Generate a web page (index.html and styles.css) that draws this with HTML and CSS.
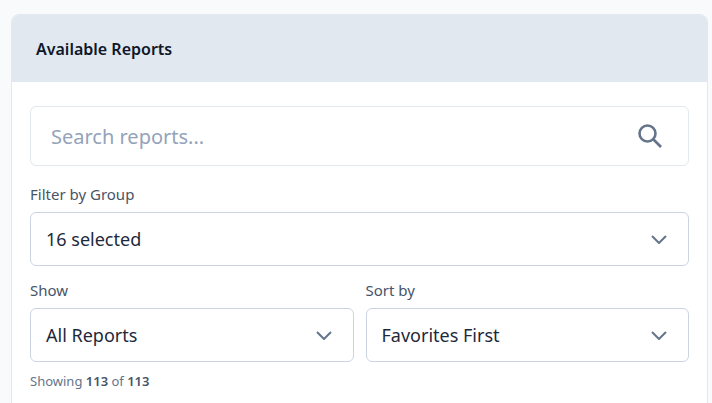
FILE: index.html
```html
<!DOCTYPE html>
<html lang="en">
<head>
<meta charset="utf-8">
<title>Available Reports</title>
<link rel="stylesheet" href="styles.css">
</head>
<body>
<section class="card">
  <header class="card-header"><h2 class="card-title">Available Reports</h2></header>
  <div class="card-body">
    <div class="search">
      <span class="search-text">Search reports...</span>
      <svg class="search-icon" viewBox="0 0 28 28" width="28" height="28" aria-hidden="true"><circle cx="11.5" cy="11.5" r="8" fill="none" stroke="currentColor" stroke-width="2.6"/><path d="M17.5 17.5 25 25" fill="none" stroke="currentColor" stroke-width="2.6"/></svg>
    </div>
    <div class="field field-group">
      <label class="label">Filter by Group</label>
      <div class="select"><span>16 selected</span><svg class="chevron" viewBox="0 0 16 9" width="16" height="9" aria-hidden="true"><path d="M1 1l7 7 7-7" fill="none" stroke="currentColor" stroke-width="2"/></svg></div>
    </div>
    <div class="row">
      <div class="field">
        <label class="label">Show</label>
        <div class="select"><span>All Reports</span><svg class="chevron" viewBox="0 0 16 9" width="16" height="9" aria-hidden="true"><path d="M1 1l7 7 7-7" fill="none" stroke="currentColor" stroke-width="2"/></svg></div>
      </div>
      <div class="field">
        <label class="label">Sort by</label>
        <div class="select"><span>Favorites First</span><svg class="chevron" viewBox="0 0 16 9" width="16" height="9" aria-hidden="true"><path d="M1 1l7 7 7-7" fill="none" stroke="currentColor" stroke-width="2"/></svg></div>
      </div>
    </div>
    <p class="count">Showing <b>113</b> of <b>113</b></p>
  </div>
</section>
</body>
</html>
```
FILE: styles.css
```css
html, body { height: 100%; }
body {
  margin: 0;
  padding: 14px 4px 0 11px;
  background: #f8fafc;
  font-family: "Noto Sans", sans-serif;
  color: #0f172a;
  overflow: hidden;
  box-sizing: border-box;
}
.card {
  background: #fff;
  border: 1px solid #e2e8f0;
  border-radius: 8px;
  height: 500px;
}
.card-header {
  background: #e2e8f0;
  height: 67px;
  display: flex;
  align-items: center;
  padding: 0 24px;
  border-radius: 7px 7px 0 0;
}
.card-title {
  margin: 0;
  font-size: 16px;
  font-weight: 600;
  color: #0f172a;
}
.card-body { padding: 24px 18px 0; }
.search {
  height: 60px;
  box-sizing: border-box;
  border: 1px solid #e2e8f0;
  border-radius: 6px;
  display: flex;
  align-items: center;
  justify-content: space-between;
  padding: 0 24px 0 20px;
  background: #fff;
}
.search-text { font-size: 20px; color: #94a3b8; }
.search-icon { color: #64748b; }
.field { flex: 1 1 0; min-width: 0; }
.field-group { margin-top: 18px; }
.label {
  display: block;
  font-size: 15px;
  line-height: 21px;
  margin-bottom: 7px;
  color: #475569;
}
.select {
  height: 54px;
  box-sizing: border-box;
  border: 1px solid #cbd5e1;
  border-radius: 6px;
  display: flex;
  align-items: center;
  justify-content: space-between;
  padding: 0 21px 0 15px;
  font-size: 18px;
  color: #1e293b;
  background: #fff;
}
.chevron { color: #64748b; }
.row { display: flex; gap: 12px; margin-top: 14px; }
.count {
  margin: 10px 0 0;
  font-size: 13px;
  line-height: 18px;
  color: #64748b;
}
.count b { font-weight: 600; color: #475569; }
```
